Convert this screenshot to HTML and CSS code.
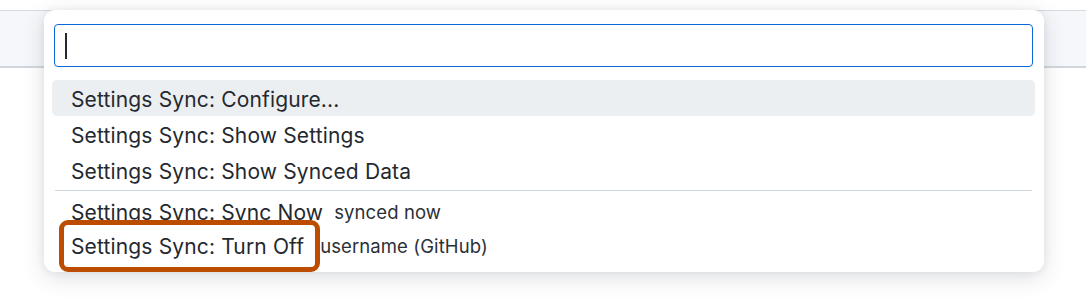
FILE: index.html
```html
<!DOCTYPE html>
<html>
<head>
<meta charset="utf-8">
<link rel="stylesheet" href="styles.css">
</head>
<body>
<div class="page">
  <div class="topbar"></div>
  <div class="palette">
    <div class="input"><span class="caret"></span></div>
    <ul class="list">
      <li class="item active"><span class="label">Settings Sync: Configure...</span></li>
      <li class="item"><span class="label">Settings Sync: Show Settings</span></li>
      <li class="item"><span class="label">Settings Sync: Show Synced Data</span></li>
      <li class="sep"></li>
      <li class="item short"><span class="label">Settings Sync: Sync Now</span><span class="desc">synced now</span></li>
      <li class="item short"><span class="label marked">Settings Sync: Turn Off</span><span class="desc tight">username (GitHub)</span></li>
    </ul>
  </div>
</div>
</body>
</html>
```

FILE: styles.css
```css
* { box-sizing: border-box; }
html, body { margin: 0; padding: 0; background: #ffffff; }
body {
  font-family: Inter, "Liberation Sans", Arial, sans-serif;
  color: #24292f;
  width: 1086px;
  height: 306px;
  overflow: hidden;
}
.page { position: relative; height: 306px; padding-top: 10px; }
.topbar {
  height: 58px;
  background: #f5f7fa;
  border-top: 1px solid #d5dae0;
  border-bottom: 2px solid #d0d7de;
}
.palette {
  position: absolute;
  left: 44px;
  top: 10px;
  width: 1000px;
  height: 262px;
  background: #ffffff;
  border-radius: 11px;
  box-shadow: 0 6px 22px rgba(60, 70, 85, 0.16), 0 0 8px rgba(60, 70, 85, 0.08);
  padding: 14px 11px 10px 10px;
}
.input {
  height: 43px;
  border: 1.5px solid #0969da;
  border-radius: 4px;
  display: flex;
  align-items: center;
  padding-left: 10px;
}
.caret {
  display: block;
  width: 2px;
  height: 26px;
  background: #24292f;
}
.list {
  list-style: none;
  margin: 13px -2px 0 -2px;
  padding: 0;
}
.item {
  height: 36px;
  display: flex;
  align-items: center;
  padding-left: 19px;
  border-radius: 5px;
  font-size: 21px;
  letter-spacing: 0.15px;
  white-space: nowrap;
  padding-top: 2px;
}
.item.short { height: 34px; }
.item.active { background: #eceff1; }
.sep {
  height: 1px;
  background: #cfd8e0;
  margin: 2px 3px 3px 3px;
}
.label { position: relative; }
.desc {
  font-size: 18.5px;
  letter-spacing: 0.1px;
  margin-left: 11px;
  color: #2b3036;
}
.desc.tight { margin-left: 16px; }
.marked::after {
  content: "";
  position: absolute;
  left: -12px;
  right: -16px;
  top: -14px;
  bottom: -13px;
  border: 5px solid #bc4c00;
  border-radius: 9px;
}
```
